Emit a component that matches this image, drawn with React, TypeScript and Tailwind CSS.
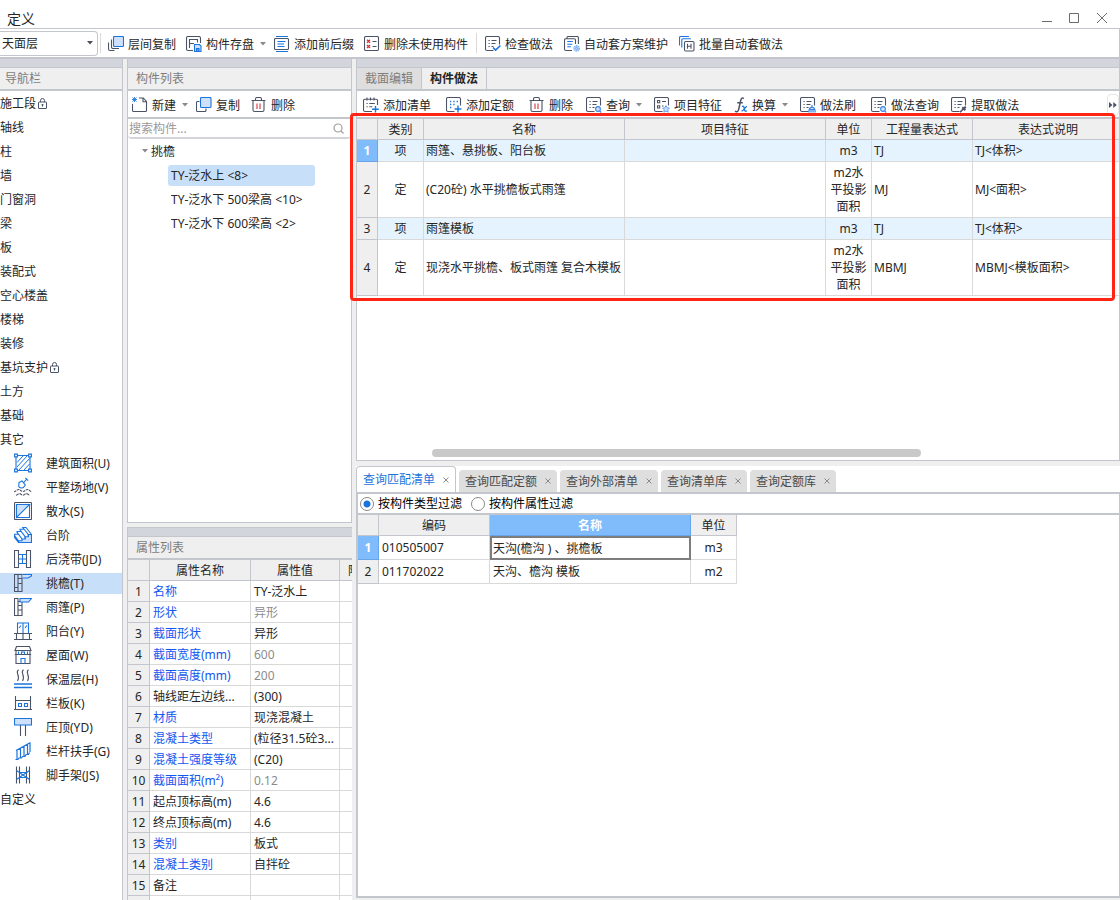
import type { ReactNode } from "react";

const INK = "#4b5366";
const BLUE = "#1b74dc";
const PALE = "#cfe1fa";

function Svg({ children, size = 16, width }: { children: ReactNode; size?: number; width?: number }) {
  const w = width ?? size;
  return (
    <svg
      width={w}
      height={size}
      viewBox={`0 0 ${w} ${size}`}
      fill="none"
      stroke={INK}
      strokeWidth={1.1}
      className="shrink-0"
      aria-hidden="true"
    >
      {children}
    </svg>
  );
}

const PAGE = "M8.5 14.5H2a1.5 1.5 0 0 1-1.5-1.5V2A1.5 1.5 0 0 1 2 .5h11A1.5 1.5 0 0 1 14.5 2v6.5";
const LINES = "M3.5 4.5h1.2M6.5 4.5h5M3.5 7.5h1.2M6.5 7.5h4M3.5 10.5h1.2M6.5 10.5h2";

const CopyLayers = () => (
  <Svg>
    <path d="M3.5 3.5v7.500a1.5 1.5 0 0 0 1.5 1.5h6M.5 6.5V13a1.500 1.500 0 0 0 1.500 1.500H6.500" />
    <rect x="5.5" y="0.5" width="10" height="10" rx="1" fill={PALE} stroke={BLUE} />
  </Svg>
);
const SaveComponent = () => (
  <Svg>
    <path d="M7 14.5H2A1.500 1.500 0 0 1 .5 13V2A1.500 1.500 0 0 1 2 .5h11A1.500 1.500 0 0 1 14.500 2v5M3.500 12V3.500H12M3.500 7.500H8M11.500 3.500v3" />
    <path d="M8.500 8.500h5l1.500 1.500v5.500H8.500z" fill={PALE} stroke={BLUE} />
    <path d="M10.500 15v-2.500h2.500V15" stroke={BLUE} fill="#5a9bea" />
  </Svg>
);
const Affix = () => (
  <Svg>
    <path d="M2 .5h12M2 15.500h12" stroke={BLUE} />
    <rect x="0.5" y="2.500" width="14" height="11" rx="1" />
    <path d="M3.500 5.500h8M3.500 8h6.500M3.500 10.500h7" stroke={BLUE} />
  </Svg>
);
const RemoveUnused = () => (
  <Svg>
    <rect x="0.5" y="0.5" width="14" height="14" rx="1.2" />
    <path d="M3 3.800l3 3M6 3.800l-3 3M3 9l3 3M6 9l-3 3" stroke="#d8343c" strokeWidth={1.4} />
    <path d="M8.5 5.500h4M8.5 10.500h4" />
  </Svg>
);
const Check = () => (
  <Svg>
    <path d={PAGE} />
    <path d={LINES} />
    <path d="M8 11.500l2.600 2.600L15.400 9.500" stroke={BLUE} strokeWidth={1.5} />
  </Svg>
);
const AutoPlan = () => (
  <Svg>
    <path d="M3 2.700V1.700A1.200 1.200 0 0 1 4.200.5h9A1.200 1.200 0 0 1 14.400 1.700V8M8 14.500H2A1.500 1.500 0 0 1 .5 13V4A1.300 1.300 0 0 1 1.800 2.700h8.500a1.200 1.200 0 0 1 1.200 1.200V8" />
    <path d="M3.300 5.500h5.500M3.300 8.200h5M3.300 10.800h3.500" stroke={BLUE} />
    <circle cx="12.600" cy="12.400" r="2.600" fill={PALE} stroke="#7db0ee" strokeDasharray="1.2 .7" strokeWidth={1.600} />
    <circle cx="12.600" cy="12.400" r="1" stroke="#5a9bea" strokeWidth={0.8} />
  </Svg>
);
const Batch = () => (
  <Svg>
    <path d="M.5 9.500V1.500a1 1 0 0 1 1-1H10M2.800 11.500V3.800a1 1 0 0 1 1-1h8" stroke={BLUE} />
    <rect x="5.500" y="5.500" width="9.500" height="9.500" rx="1.200" />
    <path d="M8.500 7.800v5M12 7.800v5M8.500 10.300H12" />
  </Svg>
);
const NewDoc = () => (
  <Svg>
    <path d="M7 1h4.300l3.200 3.500v9a1 1 0 0 1-1 1H1.500a1 1 0 0 1-1-1V7M11 1v3.700h3.500" />
    <path d="M.5 .5l4 4M4.5 .5l-4 4M2.5 0v5M0 2.500h5" stroke="#3c87e2" strokeWidth={1} />
  </Svg>
);
const Duplicate = () => (
  <Svg>
    <path d="M3.500 4.500h-2a1 1 0 0 0-1 1v8a1 1 0 0 0 1 1h7.500a1 1 0 0 0 1-1v-2" />
    <rect x="4.500" y="0.5" width="10.500" height="10" rx="1" fill={PALE} stroke={BLUE} />
  </Svg>
);
const Trash = () => (
  <Svg>
    <path d="M.5 3.500h14M2 3.500v9.500a1.500 1.500 0 0 0 1.500 1.500h8A1.500 1.500 0 0 0 13 13V3.500M4.500 3.500V2A1.500 1.500 0 0 1 6 .5h3A1.500 1.500 0 0 1 10.500 2v1.500" />
    <path d="M6 6.500v5.500M9 6.500v5.500" stroke="#d8343c" />
  </Svg>
);
const AddList = () => (
  <Svg>
    <path d="M9 14.500H2A1.500 1.500 0 0 1 .5 13V3.500A1.200 1.200 0 0 1 1.700 2.300h11.500a1.300 1.300 0 0 1 1.300 1.300V8M4 .400v3.200M7.500 .400v3.200M11 .400v3.200M3.500 6.500h1.200M6.300 6.500h5.500M3.500 9.800h1.200M6.300 9.800h3" />
    <path d="M12.500 9v6.600M9 12.300h6.800" stroke={BLUE} strokeWidth={1.400} />
  </Svg>
);
const AddQuota = () => (
  <Svg>
    <path d={PAGE} />
    <path d="M4 4.500h1.300M7.300 4.500h1.300M10.600 4.500h1.300M4 7.500h1.300M7.300 7.500h1.300M4 10.500h1.300" stroke={BLUE} strokeWidth={1.300} />
    <path d="M12 8.600v6.800M8.600 12h6.800" stroke={BLUE} strokeWidth={1.400} />
  </Svg>
);
const Query = () => (
  <Svg>
    <path d={PAGE} />
    <path d={LINES} />
    <circle cx="12" cy="12" r="2.400" fill={PALE} stroke="#3c87e2" />
    <path d="M13.600 13.800l1.600 1.700" stroke="#3c87e2" />
  </Svg>
);
const Feature = () => (
  <Svg>
    <path d={PAGE} />
    <path d="M3.500 3.500h2.200v2.200H3.500zM3.500 8.800h2.200v2.200H3.500zM8 4.500h4M8 9h1.500" />
    <path d="M12 8.600l1.100 2.200 2.400.3-1.700 1.700.4 2.400-2.200-1.100-2.200 1.100.4-2.400-1.700-1.700 2.400-.3z" fill={PALE} stroke="#5a9bea" strokeWidth={0.9} />
  </Svg>
);
const Fx = () => (
  <Svg width={14}>
    <path d="M9.800 1.600C8.600 .4 7.300 1 6.800 3L4.600 12.600C4.200 14.600 2.600 15.400 1 14.200M3.200 5.700h5.600" strokeWidth={1.500} />
    <path d="M8 9.500c1.500-.8 2 .2 2.300 2.200 .3 2.200 1 3 2.600 2M13 9.300c-1.600 .2-3.600 4.800-5.400 4.700" stroke={BLUE} strokeWidth={1.300} />
  </Svg>
);
const Brush = () => (
  <Svg>
    <path d={PAGE} />
    <path d={LINES} />
    <path d="M12 8v2.500M9.500 12.200a2.500 2 0 0 1 5 0zM9 12.500v3M11 12.500v3M13 12.500v3M15 12.500v3" stroke={BLUE} />
  </Svg>
);
const Extract = () => (
  <Svg>
    <path d={PAGE} />
    <path d={LINES} />
    <path d="M9 15.200l3.800-3.800" strokeWidth={1.500} />
    <path d="M11.300 10.300l3 3M12.800 11.800l2-2" strokeWidth={2} />
  </Svg>
);

const Lock = () => (
  <svg width="9" height="11" viewBox="0 0 9 11" fill="none" stroke={INK} className="shrink-0" aria-hidden="true">
    <path d="M2.500 4V2.500a2 2 0 0 1 4 0V4" />
    <rect x="0.500" y="4" width="8" height="6.500" rx="0.500" />
    <path d="M4.500 6v2.500M3.500 6.800h2" />
  </svg>
);

const Caret = ({ dark = false }: { dark?: boolean }) => (
  <svg width="6" height="4" viewBox="0 0 6 4" className="shrink-0" aria-hidden="true">
    <path d="M0 0h6L3 3.600z" fill={dark ? "#4b4f5a" : "#8a8a8a"} />
  </svg>
);

const Nav = ({ children }: { children: ReactNode }) => <Svg size={20} width={18}>{children}</Svg>;

const navIcons: Record<string, ReactNode> = {
  area: (
    <Nav>
      <g stroke={BLUE}>
        <path d="M2 2.500h14v15H2z" />
        <path d="M3 9.500l6-6.500M3 14L13 3M5 17L15.500 5.500M10 17l5.500-6" strokeWidth={1} />
        <path d="M.6 1.100h2.800v2.800H.6zM14.600 1.100h2.800v2.800h-2.800zM.6 16.100h2.800v2.800H.6zM14.600 16.100h2.800v2.800h-2.800z" fill="#fff" />
      </g>
    </Nav>
  ),
  level: (
    <Nav>
      <path d="M5 5.500l3-1.500 3.300 4-2 2.500c-2 .8-4 .2-4.600-1.200zM9.500 5.800L12.800 2M11.400 1l2.800 2.600" stroke={BLUE} fill="#fff" />
      <path d="M0 14.800c2-.2 2.500-2.300 4.500-2.300s2.500 2 4.500 2 2.500-2 4.500-2 2.500 2.300 4.500 2.300" strokeDasharray="2.500 .8" />
      <path d="M2 18.200c1.500 0 2-1.600 3.500-1.600S7.500 18.200 9 18.200s2-1.600 3.500-1.600 2 1.600 3.500 1.600" strokeDasharray="3 .8" />
    </Nav>
  ),
  apron: (
    <Nav>
      <rect x="0.500" y="1.500" width="17" height="17" rx="0.800" />
      <path d="M2.500 3.500h13v13h-13z" stroke={BLUE} fill="#fff" />
      <path d="M2.500 3.500h13l-13 13z" fill={PALE} stroke={BLUE} />
    </Nav>
  ),
  steps: (
    <Nav>
      <path d="M4.500 17.500h13V9.500h-3.200v2.200h-3.200v2.300H8v1.800H4.500z" fill={PALE} stroke={BLUE} strokeWidth={1.100} />
      <path d="M14.300 9.500L8.800 2.500h3.200l5.500 7M11.100 11.700L6 4.800v-.5h3.800M8 14L3 7.200v-.700h3.800M4.500 15.800L.6 10.500V9.200h3.400M.6 10.500v2l3.900 5M14.300 9.500v2.200M11.100 11.700V14" stroke={BLUE} strokeWidth={1.100} />
    </Nav>
  ),
  strip: (
    <Nav>
      <path d="M.5 1.500h4v17h-4zM12.500 1.500h4v17h-4z" />
      <path d="M4.500 5.500h8M4.500 10h8M4.500 14.500h8M8.500 5.500v9" stroke={BLUE} />
    </Nav>
  ),
  eave: (
    <Nav>
      <path d="M.5 1.500h3.500v17H.5zM4 1.500h4v17H4M4 5.500h4M4 10.500h4M.5 14.500H4" />
      <path d="M8.500 1.500h9v1.500l-3.500 2H8.500" stroke={BLUE} fill={PALE} />
    </Nav>
  ),
  canopy: (
    <Nav>
      <path d="M.5 1.500h3.500v17H.5zM4 4.500h4v14H4M4 8.500h4M4 13h4" />
      <path d="M6 1.500h11.500l-3 3.500H6z" stroke={BLUE} fill={PALE} />
    </Nav>
  ),
  balcony: (
    <Nav>
      <path d="M3.500 12V2h11v10M9 2v10" stroke={BLUE} />
      <path d="M5 7l2-2.500M11 7l2-2.500" stroke={BLUE} />
      <path d="M0 12.500h18M0 18.500h18M2.500 12.500v6M9 12.500v6M15.500 12.500v6" />
    </Nav>
  ),
  roof: (
    <Nav>
      <path d="M2.500 1.500h13l1.500 4H1zM2 5.500v13h14v-13M.8 9.500h16.400" />
      <path d="M4.500 9.500v-3M7.500 9.500V7h3v2.500M13.500 9.500v-3M7 18.500v-5h4v5" stroke={BLUE} />
    </Nav>
  ),
  insulation: (
    <Nav>
      <path d="M4.500.8C.5 3.500 7 6.500 3.500 12M9.500.8C5.500 3.500 12 6.500 8.500 12M14.500.8C10.500 3.500 17 6.500 13.500 12" />
      <path d="M0 15h18M0 18.500h18" stroke={BLUE} strokeWidth={1.300} />
    </Nav>
  ),
  board: (
    <Nav>
      <path d="M1.500 3v13.500M16.500 3v13.500M0 16.500h18M1.500 7.500h15" />
      <path d="M4.500 10.500h3v3h-3zM10.500 10.500h3v3h-3z" stroke={BLUE} />
    </Nav>
  ),
  coping: (
    <Nav>
      <path d="M6.500 8v11M11.500 8v11" />
      <path d="M.5 1.500h17v6.500H.5z" fill={PALE} stroke={BLUE} />
    </Nav>
  ),
  rail: (
    <Nav>
      <path d="M2 9.500L16.500 1.500M1.500 18.500h2.500l1-1.500h2.500l1-1.500H11l1-2h2.500l1-2M3 9v9.500M6.500 7.500V17M10 5.500v10M13.500 3.500v10M16 2v9" stroke={BLUE} strokeWidth={1.200} />
    </Nav>
  ),
  scaffold: (
    <Nav>
      <path d="M2.500 1.500v17M5.500 1.500v17M12.500 1.500v17M15.500 1.500v17" />
      <path d="M2.500 5.500l13 9M15.500 5.500l-13 9M5.500 7.500h7M5.500 12.500h7" stroke={BLUE} />
    </Nav>
  ),
};

const navGroups: { label: string; locked?: boolean }[] = [
  { label: "施工段", locked: true },
  { label: "轴线" },
  { label: "柱" },
  { label: "墙" },
  { label: "门窗洞" },
  { label: "梁" },
  { label: "板" },
  { label: "装配式" },
  { label: "空心楼盖" },
  { label: "楼梯" },
  { label: "装修" },
  { label: "基坑支护", locked: true },
  { label: "土方" },
  { label: "基础" },
  { label: "其它" },
];

const navItems: [string, string][] = [
  ["area", "建筑面积(U)"],
  ["level", "平整场地(V)"],
  ["apron", "散水(S)"],
  ["steps", "台阶"],
  ["strip", "后浇带(JD)"],
  ["eave", "挑檐(T)"],
  ["canopy", "雨篷(P)"],
  ["balcony", "阳台(Y)"],
  ["roof", "屋面(W)"],
  ["insulation", "保温层(H)"],
  ["board", "栏板(K)"],
  ["coping", "压顶(YD)"],
  ["rail", "栏杆扶手(G)"],
  ["scaffold", "脚手架(JS)"],
];

const properties: { name: string; value: string; link?: boolean; muted?: boolean }[] = [
  { name: "名称", value: "TY-泛水上", link: true },
  { name: "形状", value: "异形", link: true, muted: true },
  { name: "截面形状", value: "异形", link: true },
  { name: "截面宽度(mm)", value: "600", link: true, muted: true },
  { name: "截面高度(mm)", value: "200", link: true, muted: true },
  { name: "轴线距左边线...", value: "(300)" },
  { name: "材质", value: "现浇混凝土", link: true },
  { name: "混凝土类型", value: "(粒径31.5砼3...", link: true },
  { name: "混凝土强度等级", value: "(C20)", link: true },
  { name: "截面面积(m²)", value: "0.12", link: true, muted: true },
  { name: "起点顶标高(m)", value: "4.6" },
  { name: "终点顶标高(m)", value: "4.6" },
  { name: "类别", value: "板式", link: true },
  { name: "混凝土类别", value: "自拌砼", link: true },
  { name: "备注", value: "" },
];

const methods = [
  ["项", "雨篷、悬挑板、阳台板", "m3", "TJ", "TJ<体积>"],
  ["定", "(C20砼) 水平挑檐板式雨篷", "m2水平投影面积", "MJ", "MJ<面积>"],
  ["项", "雨篷模板", "m3", "TJ", "TJ<体积>"],
  ["定", "现浇水平挑檐、板式雨篷 复合木模板", "m2水平投影面积", "MBMJ", "MBMJ<模板面积>"],
];

function Tool({ icon, label, menu = false }: { icon: ReactNode; label: string; menu?: boolean }) {
  return (
    <button type="button" className="flex shrink-0 items-center gap-1 whitespace-nowrap">
      {icon}
      <span>{label}</span>
      {menu && (
        <span className="ml-0.5">
          <Caret />
        </span>
      )}
    </button>
  );
}

const Band = () => <div className="h-[9px] shrink-0 border-b border-[#c3c6cc] bg-[#d3d5dc]" />;

function PanelTitle({ children }: { children: ReactNode }) {
  return (
    <h2 className="flex h-[23px] shrink-0 items-center border-b-2 border-[#c3c6cc] bg-[#efefef] pl-2 text-[#7d7d7d]">
      {children}
    </h2>
  );
}

const TH = "border-r border-b border-[#c3c6cc] bg-[#efefef] p-0 text-center font-normal";
const TD = "border-r border-b border-[#d9d9d9] p-0";
const SELECTED = "border-r border-b border-[#67a5ea] bg-[#80bbfb] p-0 text-center font-bold text-white";

function QueryTab({ label }: { label: string }) {
  return (
    <div className="flex h-[22px] items-center gap-2 rounded-t bg-[#dedede] px-1.5 text-[#4a4a4a]">
      <button type="button" role="tab" aria-selected="false">
        {label}
      </button>
      <CloseTab label={label} />
    </div>
  );
}

function CloseTab({ label }: { label: string }) {
  return (
    <button type="button" aria-label={`关闭${label}`} className="flex">
      <svg width="6" height="6" viewBox="0 0 6 6" stroke="#8a8a8a" aria-hidden="true">
        <path d="M.5 .5l5 5M5.500 .5l-5 5" />
      </svg>
    </button>
  );
}

const RADIO =
  "m-0 size-[14px] appearance-none rounded-full border border-[#8a8a8a] bg-white checked:bg-[radial-gradient(circle,#1b74dc_0_3px,#ffffff_4px)]";

export default function App() {
  return (
    <div className="flex h-screen flex-col overflow-hidden bg-white font-['Noto_Sans','Noto_Sans_CJK_SC',sans-serif] text-[12px] leading-[17px] text-[#262626]">
      <header className="flex h-[29px] shrink-0 items-center justify-between border-b border-[#c3c6cc] pt-2 pr-3 pl-[7px]">
        <h1 className="text-[14px]">定义</h1>
        <div className="flex items-center gap-[17px] text-[#6b6b6b]">
          <button type="button" aria-label="最小化">
            <svg width="10" height="12" viewBox="0 0 10 12" stroke="currentColor" aria-hidden="true">
              <path d="M0 9.500h10" />
            </svg>
          </button>
          <button type="button" aria-label="最大化">
            <svg width="10" height="12" viewBox="0 0 10 12" fill="none" stroke="currentColor" aria-hidden="true">
              <path d="M.5 1.500h9v9h-9z" />
            </svg>
          </button>
          <button type="button" aria-label="关闭">
            <svg width="12" height="12" viewBox="0 0 12 12" stroke="currentColor" aria-hidden="true">
              <path d="M1 1l10 10M11 1L1 11" />
            </svg>
          </button>
        </div>
      </header>

      <div className="flex h-[30px] shrink-0 items-center border-r border-b-2 border-[#c3c6cc]">
        <div className="relative w-[98px] shrink-0">
          <select
            aria-label="楼层"
            className="block h-[25px] w-full appearance-none rounded-r border border-l-0 border-[#c3c6cc] bg-white pl-0.5 outline-none"
          >
            <option>天面层</option>
          </select>
          <span className="pointer-events-none absolute inset-y-0 right-[5px] flex items-center">
            <Caret dark />
          </span>
        </div>
        <div className="ml-0.5 h-5 w-px bg-[#d9d9d9]" />
        <div className="ml-[7px] flex items-center gap-2.5 pt-0.5">
          <div className="flex gap-2.5">
            <Tool icon={<CopyLayers />} label="层间复制" />
            <Tool icon={<SaveComponent />} label="构件存盘" menu />
          </div>
          <div className="-ml-0.5 flex gap-2.5">
            <Tool icon={<Affix />} label="添加前后缀" />
            <Tool icon={<RemoveUnused />} label="删除未使用构件" />
          </div>
        </div>
        <div className="mx-2 h-5 w-px bg-[#d9d9d9]" />
        <div className="flex items-center gap-[11px] pt-0.5">
          <Tool icon={<Check />} label="检查做法" />
          <Tool icon={<AutoPlan />} label="自动套方案维护" />
          <Tool icon={<Batch />} label="批量自动套做法" />
        </div>
      </div>

      <main className="flex min-h-0 flex-1 gap-1 bg-[#efefef]">
        <nav aria-label="导航栏" className="flex w-[123px] shrink-0 flex-col overflow-hidden border-r border-[#c3c6cc] bg-white">
          <Band />
          <h2 className="flex h-[23px] shrink-0 items-center border-b-2 border-[#c3c6cc] bg-[#efefef] pl-[5px] text-[#7d7d7d]">
            导航栏
          </h2>
          <ul>
            {navGroups.map((g) => (
              <li key={g.label} className="flex h-6 items-center">
                <button type="button" className="flex items-center gap-0.5">
                  {g.label}
                  {g.locked && <Lock />}
                </button>
              </li>
            ))}
            {navItems.map(([icon, label]) => (
              <li key={label} className="flex h-6 items-center">
                <button
                  type="button"
                  className={
                    icon === "eave"
                      ? "flex h-[21px] w-full items-center gap-[14px] bg-[#c8dff9] pl-3.5"
                      : "flex h-[21px] w-full items-center gap-[14px] pl-3.5"
                  }
                >
                  {navIcons[icon]}
                  <span className="whitespace-nowrap">{label}</span>
                </button>
              </li>
            ))}
            <li className="flex h-6 items-center">
              <button type="button">自定义</button>
            </li>
          </ul>
        </nav>

        <div className="flex w-[225px] shrink-0 flex-col gap-1">
          <section className="flex h-[464px] shrink-0 flex-col border-x border-b border-[#c3c6cc] bg-white">
            <Band />
            <PanelTitle>构件列表</PanelTitle>
            <div className="flex h-7 shrink-0 items-center border-b-2 border-[#c3c6cc] pt-0.5 pl-1">
              <div className="flex gap-2">
                <Tool icon={<NewDoc />} label="新建" menu />
                <Tool icon={<Duplicate />} label="复制" />
              </div>
              <div className="ml-[11px]">
                <Tool icon={<Trash />} label="删除" />
              </div>
            </div>
            <div className="flex h-5 shrink-0 items-center rounded-sm border-b-2 border-[#d3d5d9] pr-[7px] pl-px">
              <input
                type="text"
                aria-label="搜索构件"
                placeholder="搜索构件..."
                className="min-w-0 flex-1 outline-none placeholder:text-[#9a9a9a]"
              />
              <svg width="11" height="11" viewBox="0 0 11 11" fill="none" stroke="#a0a0a0" strokeWidth={1.2} aria-hidden="true">
                <circle cx="5" cy="5" r="4" />
                <path d="M8 8l2.500 2.500" />
              </svg>
            </div>
            <ul>
              <li>
                <button type="button" className="flex h-6 items-center gap-[3px] pl-3.5">
                  <Caret />
                  挑檐
                </button>
                <ul className="pl-10">
                  {["TY-泛水上 <8>", "TY-泛水下 500梁高 <10>", "TY-泛水下 600梁高 <2>"].map((t, i) => (
                    <li key={t} className="flex h-6 items-center">
                      <button
                        type="button"
                        className={
                          i === 0
                            ? "h-[21px] w-[147px] rounded-[3px] bg-[#c8dff9] pl-[3px] text-left"
                            : "h-[21px] pl-[3px] text-left whitespace-nowrap"
                        }
                      >
                        {t}
                      </button>
                    </li>
                  ))}
                </ul>
              </li>
            </ul>
          </section>

          <section className="flex min-h-0 flex-1 flex-col overflow-hidden border-t border-l border-[#c3c6cc] bg-white">
            <Band />
            <PanelTitle>属性列表</PanelTitle>
            <table className="w-[255px] shrink-0 table-fixed border-separate border-spacing-0">
              <colgroup>
                <col className="w-[22px]" />
                <col className="w-[101px]" />
                <col className="w-[89px]" />
                <col />
              </colgroup>
              <thead>
                <tr className="h-[21px]">
                  <th className={TH} aria-label="序号" />
                  <th className={TH}>属性名称</th>
                  <th className={TH}>属性值</th>
                  <th className="border-b border-[#c3c6cc] bg-[#efefef] p-0 pl-2 text-left font-normal">附</th>
                </tr>
              </thead>
              <tbody>
                {properties.map((p, i) => (
                  <tr key={p.name} className="h-[21px]">
                    <th className={TH}>{i + 1}</th>
                    <td className={TD}>
                      <div className={p.link ? "pl-[3px] whitespace-nowrap text-[#1257f0]" : "pl-[3px] whitespace-nowrap"}>
                        {p.name}
                      </div>
                    </td>
                    <td className={TD}>
                      <div className={p.muted ? "pl-[3px] whitespace-nowrap text-[#8c8c8c]" : "pl-[3px] whitespace-nowrap"}>
                        {p.value}
                      </div>
                    </td>
                    <td className={TD} />
                  </tr>
                ))}
                <tr className="h-[21px]">
                  <th className={TH} aria-label="分组" />
                  <td className={TD}>
                    <div className="ml-[3px] size-[13px] border border-[#7d7d7d] bg-[#efefef]" />
                  </td>
                  <td className={TD} />
                  <td className={TD} />
                </tr>
              </tbody>
            </table>
          </section>
        </div>

        <div className="flex min-w-0 flex-1 flex-col">
          <section className="relative flex h-[402px] shrink-0 flex-col border-x border-b border-[#c3c6cc] bg-white">
            <Band />
            <div role="tablist" className="flex h-[23px] shrink-0 border-b-2 border-[#c3c6cc] bg-[#efefef]">
              <button type="button" role="tab" aria-selected="false" className="border-r border-[#c3c6cc] bg-[#dedede] px-2 text-[#7d7d7d]">
                截面编辑
              </button>
              <button type="button" role="tab" aria-selected="true" className="border-r border-[#c3c6cc] px-2 font-bold">
                构件做法
              </button>
            </div>
            <div className="flex h-7 shrink-0 items-center justify-between border-b-2 border-[#c3c6cc] pt-0.5 pl-1.5">
              <div className="flex items-center">
                <div className="flex gap-[15px]">
                  <Tool icon={<AddList />} label="添加清单" />
                  <Tool icon={<AddQuota />} label="添加定额" />
                  <Tool icon={<Trash />} label="删除" />
                </div>
                <div className="ml-[13px] flex gap-3">
                  <Tool icon={<Query />} label="查询" menu />
                  <Tool icon={<Feature />} label="项目特征" />
                  <Tool icon={<Fx />} label="换算" menu />
                  <Tool icon={<Brush />} label="做法刷" />
                </div>
                <div className="ml-[15px] flex gap-3">
                  <Tool icon={<Query />} label="做法查询" />
                  <Tool icon={<Extract />} label="提取做法" />
                </div>
              </div>
              <button
                type="button"
                aria-label="更多"
                className="flex h-[22px] w-3 shrink-0 items-center justify-center rounded border border-[#e6e6e6]"
              >
                <svg width="8" height="6" viewBox="0 0 8 6" fill={INK} className="shrink-0" aria-hidden="true">
                  <path d="M0 0l3.500 3L0 6zM4.300 0l3.500 3-3.500 3z" />
                </svg>
              </button>
            </div>
            <table className="w-full shrink-0 table-fixed border-separate border-spacing-0">
              <colgroup>
                <col className="w-[21px]" />
                <col className="w-[46px]" />
                <col className="w-[201px]" />
                <col className="w-[201px]" />
                <col className="w-[46px]" />
                <col className="w-[101px]" />
                <col />
              </colgroup>
              <thead>
                <tr className="h-[21px]">
                  <th className={TH} aria-label="序号" />
                  <th className={TH}>类别</th>
                  <th className={TH}>名称</th>
                  <th className={TH}>项目特征</th>
                  <th className={TH}>单位</th>
                  <th className={TH}>工程量表达式</th>
                  <th className="border-b border-[#c3c6cc] bg-[#efefef] p-0 pl-1 text-center font-normal">表达式说明</th>
                </tr>
              </thead>
              <tbody>
                {methods.map(([kind, name, unit, expr, note], i) => (
                  <tr key={name} className={kind === "项" ? "h-[22px] bg-[#e5f3ff]" : "h-14"}>
                    <th className={i === 0 ? SELECTED : TH}>{i + 1}</th>
                    <td className={`${TD} text-center`}>{kind}</td>
                    <td className={TD}>
                      <div className="pl-0.5 whitespace-nowrap">{name}</div>
                    </td>
                    <td className={TD} />
                    <td className={TD}>
                      <div className="px-1 text-center">{unit}</div>
                    </td>
                    <td className={TD}>
                      <div className="pl-0.5">{expr}</div>
                    </td>
                    <td className="border-b border-[#d9d9d9] p-0">
                      <div className="pl-0.5">{note}</div>
                    </td>
                  </tr>
                ))}
              </tbody>
            </table>
            <div className="mt-auto mr-[198px] mb-[3px] ml-[75px] h-2 shrink-0 rounded-full bg-[#c9c9c9]" />
            <div className="pointer-events-none absolute top-[54px] right-1 -left-[7px] h-[188px] rounded border-[3px] border-[#ff2414]" />
          </section>

          <section className="mt-[5px] mb-0.5 flex min-h-0 flex-1 flex-col bg-white">
            <div role="tablist" className="flex h-[26px] shrink-0 items-end gap-[3px]">
              <div className="flex h-[26px] items-center gap-2 rounded-t border border-b-0 border-[#c3c6cc] px-1.5 text-[#1b74dc]">
                <button type="button" role="tab" aria-selected="true">
                  查询匹配清单
                </button>
                <CloseTab label="查询匹配清单" />
              </div>
              {["查询匹配定额", "查询外部清单", "查询清单库", "查询定额库"].map((t) => (
                <QueryTab key={t} label={t} />
              ))}
            </div>
            <div className="flex min-h-0 flex-1 flex-col border-2 border-r border-[#c3c6cc]">
              <div className="flex h-[21px] shrink-0 items-center gap-[9px] border-b-2 border-[#c3c6cc] pl-0.5 text-black">
                <label className="flex items-center gap-1">
                  <input type="radio" name="filter" defaultChecked className={RADIO} />
                  按构件类型过滤
                </label>
                <label className="flex items-center gap-1">
                  <input type="radio" name="filter" className={RADIO} />
                  按构件属性过滤
                </label>
              </div>
              <table className="w-[379px] table-fixed border-separate border-spacing-0">
                <colgroup>
                  <col className="w-[21px]" />
                  <col className="w-[111px]" />
                  <col className="w-[201px]" />
                  <col className="w-[46px]" />
                </colgroup>
                <thead>
                  <tr className="h-[21px]">
                    <th className={TH} aria-label="序号" />
                    <th className={TH}>编码</th>
                    <th className={SELECTED}>名称</th>
                    <th className={TH}>单位</th>
                  </tr>
                </thead>
                <tbody>
                  <tr className="h-6">
                    <th className={SELECTED}>1</th>
                    <td className={TD}>
                      <div className="pl-[3px]">010505007</div>
                    </td>
                    <td className="border-2 border-[#7d7d7d] p-0">
                      <div className="pl-px whitespace-nowrap">天沟(檐沟 ) 、挑檐板</div>
                    </td>
                    <td className={`${TD} text-center`}>m3</td>
                  </tr>
                  <tr className="h-6">
                    <th className={TH}>2</th>
                    <td className={TD}>
                      <div className="pl-[3px]">011702022</div>
                    </td>
                    <td className={TD}>
                      <div className="pl-[3px] whitespace-nowrap">天沟、檐沟 模板</div>
                    </td>
                    <td className={`${TD} text-center`}>m2</td>
                  </tr>
                </tbody>
              </table>
            </div>
          </section>
        </div>
      </main>
    </div>
  );
}
